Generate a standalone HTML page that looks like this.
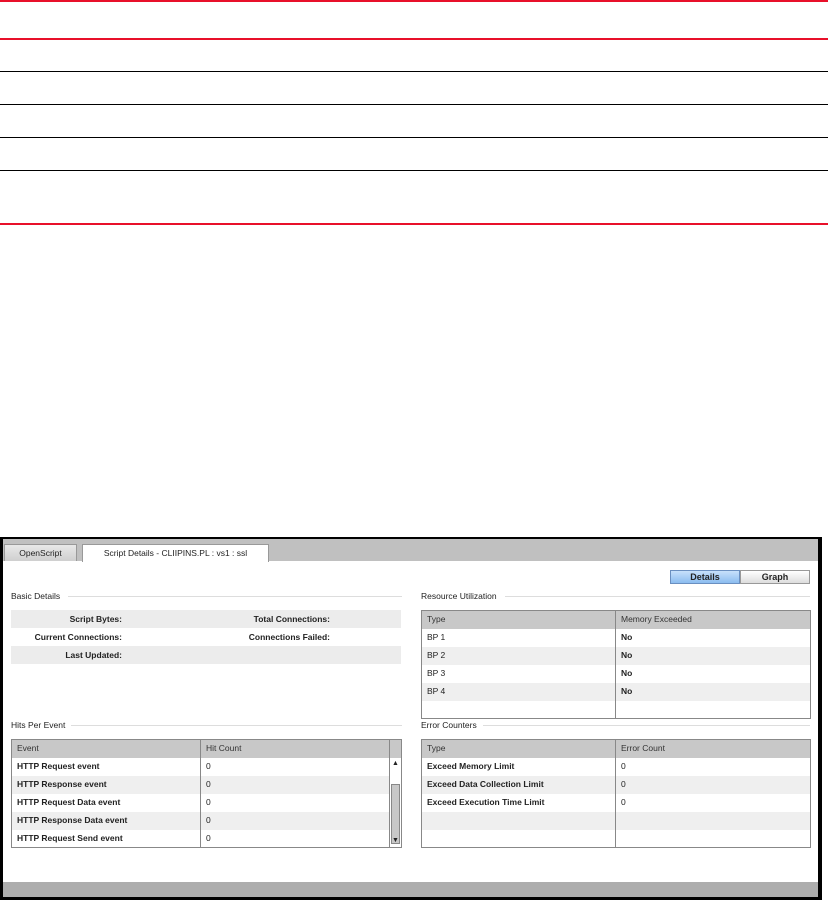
<!DOCTYPE html>
<html><head><style>
body{margin:0;width:828px;height:902px;background:#fff;position:relative;overflow:hidden;font-family:"Liberation Sans",sans-serif;font-size:9px;color:#222}
.a{position:absolute}
.hl{position:absolute;left:0;width:828px}
.t{position:absolute;font-size:8.5px;white-space:nowrap}
.b{font-weight:bold}
.sec{position:absolute;height:1px;background:#ddd}
table{border-collapse:collapse;position:absolute;font-size:8.5px;table-layout:fixed}
td,th{height:18px;padding:0 0 0 5px;box-sizing:border-box;line-height:17px;overflow:hidden;white-space:nowrap}
tr:nth-child(odd) td{background:#efefef}
th{background:#c8c8c8;font-weight:normal;text-align:left;color:#333}
</style></head><body>
<div class="hl" style="top:0;height:2px;background:#e8102a"></div>
<div class="hl" style="top:38px;height:2px;background:#e8102a"></div>
<div class="hl" style="top:71px;height:1px;background:#000"></div>
<div class="hl" style="top:104px;height:1px;background:#000"></div>
<div class="hl" style="top:137px;height:1px;background:#000"></div>
<div class="hl" style="top:170px;height:1px;background:#000"></div>
<div class="hl" style="top:223px;height:2px;background:#e8102a"></div>

<div class="a" style="left:0;top:537px;width:822px;height:363px;background:#000"></div>
<div class="a" style="left:3px;top:539px;width:815px;height:358px;background:#fff"></div>
<div class="a" style="left:3px;top:539px;width:815px;height:22px;background:#c0c0c0"></div>
<div class="a" style="left:4px;top:544px;width:73px;height:17px;background:linear-gradient(#e8e8e8,#cfcfcf);border:1px solid #999;border-bottom:none;box-sizing:border-box;text-align:center;line-height:16px;font-size:8.5px">OpenScript</div>
<div class="a" style="left:82px;top:544px;width:187px;height:18px;background:#fff;border:1px solid #999;border-bottom:none;box-sizing:border-box;text-align:center;line-height:16px;font-size:8.5px">Script Details - CLIIPINS.PL : vs1 : ssl</div>
<div class="a" style="left:3px;top:882px;width:815px;height:15px;background:#adadad"></div>

<div class="a" style="left:670px;top:570px;width:70px;height:14px;background:linear-gradient(#c8e0fb,#8cbcf0);border:1px solid #6a8fc0;box-sizing:border-box;text-align:center;line-height:12px" ><b>Details</b></div>
<div class="a" style="left:740px;top:570px;width:70px;height:14px;background:linear-gradient(#fff,#ddd);border:1px solid #999;box-sizing:border-box;text-align:center;line-height:12px"><b>Graph</b></div>

<div class="t" style="left:11px;top:591px">Basic Details</div><div class="sec" style="left:68px;top:596px;width:334px"></div>
<div class="a" style="left:11px;top:610px;width:390px;height:18px;background:#ececec"></div>
<div class="a" style="left:11px;top:646px;width:390px;height:18px;background:#ececec"></div>
<div class="t b" style="right:706px;top:614px">Script Bytes:</div>
<div class="t b" style="right:706px;top:632px">Current Connections:</div>
<div class="t b" style="right:706px;top:650px">Last Updated:</div>
<div class="t b" style="right:498px;top:614px">Total Connections:</div>
<div class="t b" style="right:498px;top:632px">Connections Failed:</div>

<div class="t" style="left:421px;top:591px">Resource Utilization</div><div class="sec" style="left:505px;top:596px;width:305px"></div>
<table style="left:421px;top:610px;width:390px;border:1px solid #888">
<tr><th style="width:194px;border-right:1px solid #888">Type</th><th>Memory Exceeded</th></tr>
<tr><td style="border-right:1px solid #888">BP 1</td><td class="b">No</td></tr>
<tr><td style="border-right:1px solid #888">BP 2</td><td class="b">No</td></tr>
<tr><td style="border-right:1px solid #888">BP 3</td><td class="b">No</td></tr>
<tr><td style="border-right:1px solid #888">BP 4</td><td class="b">No</td></tr>
<tr><td style="border-right:1px solid #888;background:#fff"></td><td style="background:#fff"></td></tr>
</table>

<div class="t" style="left:11px;top:720px">Hits Per Event</div><div class="sec" style="left:71px;top:725px;width:331px"></div>
<table style="left:11px;top:739px;width:391px;border:1px solid #888">
<tr><th style="width:189px;border-right:1px solid #888">Event</th><th>Hit Count</th><th style="width:12px;border-left:1px solid #888;padding:0"></th></tr>
<tr><td class="b" style="border-right:1px solid #888">HTTP Request event</td><td>0</td><td rowspan="5" style="background:#fff;padding:0;border-left:1px solid #888;position:relative"><div style="position:absolute;left:1px;right:1px;top:26px;height:60px;background:#c8c8c8;border:1px solid #888;box-sizing:border-box"></div><div style="position:absolute;top:0;left:2px;font-size:7px;line-height:12px">▲</div><div style="position:absolute;bottom:0;left:2px;font-size:7px;line-height:12px">▼</div></td></tr>
<tr><td class="b" style="border-right:1px solid #888">HTTP Response event</td><td>0</td></tr>
<tr><td class="b" style="border-right:1px solid #888">HTTP Request Data event</td><td>0</td></tr>
<tr><td class="b" style="border-right:1px solid #888">HTTP Response Data event</td><td>0</td></tr>
<tr><td class="b" style="border-right:1px solid #888">HTTP Request Send event</td><td>0</td></tr>
</table>

<div class="t" style="left:421px;top:720px">Error Counters</div><div class="sec" style="left:483px;top:725px;width:327px"></div>
<table style="left:421px;top:739px;width:390px;border:1px solid #888">
<tr><th style="width:194px;border-right:1px solid #888">Type</th><th>Error Count</th></tr>
<tr><td class="b" style="border-right:1px solid #888">Exceed Memory Limit</td><td>0</td></tr>
<tr><td class="b" style="border-right:1px solid #888">Exceed Data Collection Limit</td><td>0</td></tr>
<tr><td class="b" style="border-right:1px solid #888">Exceed Execution Time Limit</td><td>0</td></tr>
<tr><td style="border-right:1px solid #888"></td><td></td></tr>
<tr><td style="border-right:1px solid #888"></td><td></td></tr>
</table>
</body></html>
